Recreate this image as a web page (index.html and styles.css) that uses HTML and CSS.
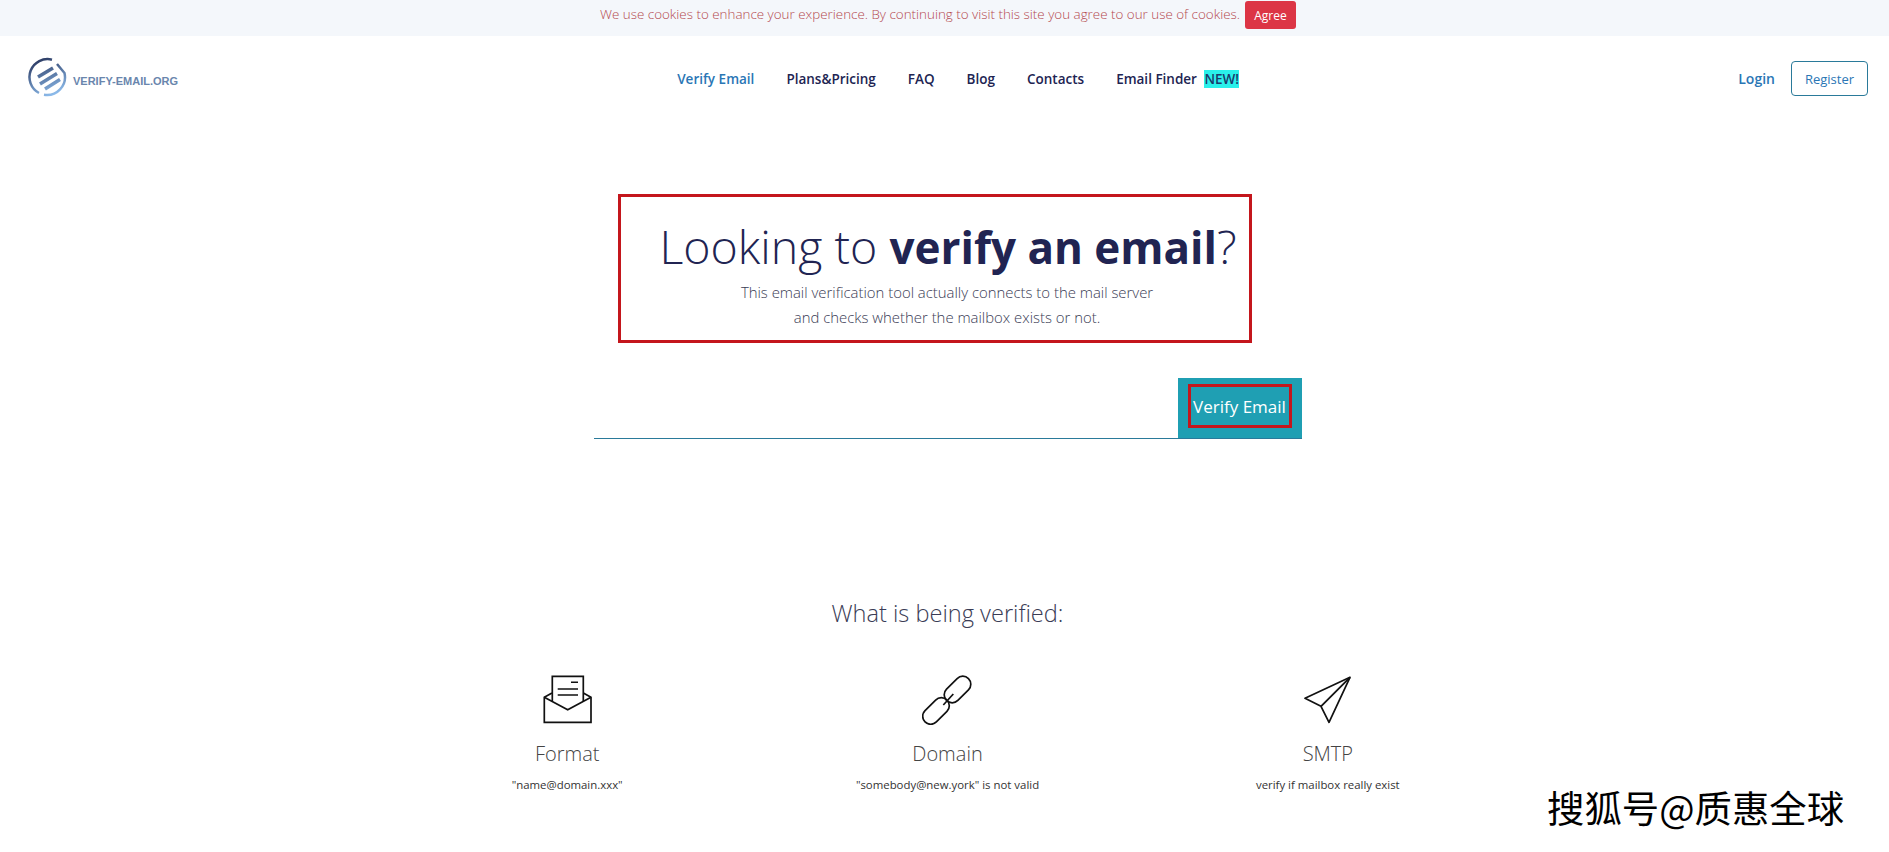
FILE: index.html
```html
<!DOCTYPE html>
<html lang="en">
<head>
    <meta charset="UTF-8">
    <meta name="viewport" content="width=device-width, initial-scale=1.0">
    <title>Verify Email</title>
    <link rel="stylesheet" href="styles.css">
</head>
<body>
    <div class="cookie-bar">
        <span>We use cookies to enhance your experience. By continuing to visit this site you agree to our use of cookies.</span>
        <button class="agree-btn">Agree</button>
    </div>

    <div class="navbar">
        <a class="logo" href="#">
            <svg width="40" height="40" viewBox="0 0 40 40" fill="none">
                <defs>
                    <linearGradient id="logo-grad" gradientUnits="userSpaceOnUse" x1="12" y1="2" x2="26" y2="38">
                        <stop offset="0" stop-color="#2b3a63"/>
                        <stop offset="1" stop-color="#8dbcec"/>
                    </linearGradient>
                </defs>
                <path d="M25 2.700A18 18 0 0 0 12 36" stroke="url(#logo-grad)" stroke-width="2.500"/>
                <path d="M17 37.800A18 18 0 0 0 37.500 16L30 7" stroke="url(#logo-grad)" stroke-width="2.500"/>
                <path d="M11 20L26 11M13 27L30 16.500M18 32L33 22.500" stroke="url(#logo-grad)" stroke-width="3.500"/>
            </svg>
            <span>VERIFY-EMAIL.ORG</span>
        </a>
        <nav class="main-nav">
            <a class="active" href="#">Verify Email</a>
            <a href="#">Plans&amp;Pricing</a>
            <a href="#">FAQ</a>
            <a href="#">Blog</a>
            <a href="#">Contacts</a>
            <a href="#">Email Finder <mark>NEW!</mark></a>
        </nav>
        <div class="auth">
            <a class="login" href="#">Login</a>
            <a class="register" href="#">Register</a>
        </div>
    </div>

    <div class="main">
        <div class="hero">
            <h1>Looking to <strong>verify an email</strong>?</h1>
            <p>This email verification tool actually connects to the mail server<br>and checks whether the mailbox exists or not.</p>
        </div>

        <form class="verify-form">
            <input type="text" aria-label="Email">
            <div class="verify-btn"><span>Verify Email</span></div>
        </form>

        <h2 class="features-title">What is being verified:</h2>

        <div class="features">
            <div class="feature">
                <svg width="50" height="50" viewBox="0 0 50 50" fill="none" stroke="#111" stroke-width="1.700">
                    <path d="M10 18L2.300 22.300V47.300H49V22.300L41.300 18"/>
                    <path d="M2.300 22.300L25.700 34.700L49 22.300"/>
                    <path d="M10.300 26V1.300H41.300V26"/>
                    <path d="M29 7.300H36M15.700 14H36M15.700 20H36" stroke-width="1.400"/>
                </svg>
                <h3>Format</h3>
                <p>"name@domain.xxx"</p>
            </div>
            <div class="feature">
                <svg width="50" height="50" viewBox="0 0 50 50" fill="none" stroke="#111" stroke-width="1.700">
                    <rect x="-15.500" y="-8" width="31" height="16" rx="8" transform="translate(35.500 14.500) rotate(-45)"/>
                    <rect x="-15.500" y="-8" width="31" height="16" rx="8" transform="translate(14 36) rotate(-45)"/>
                    <path d="M21.300 30L31.300 19"/>
                </svg>
                <h3>Domain</h3>
                <p>"somebody@new.york" is not valid</p>
            </div>
            <div class="feature">
                <svg width="50" height="50" viewBox="0 0 50 50" fill="none" stroke="#111" stroke-width="1.700" stroke-linejoin="round">
                    <path d="M47 2.300L2 23.300L18 31.300L26 47.300Z"/>
                    <path d="M47 2.300L18 31.300"/>
                </svg>
                <h3>SMTP</h3>
                <p>verify if mailbox really exist</p>
            </div>
        </div>
    </div>

    <div class="watermark">搜狐号@质惠全球</div>
</body>
</html>
```

FILE: styles.css
```css
* {
    margin: 0;
    padding: 0;
    box-sizing: border-box;
}

body {
    font-family: 'Open Sans', 'Noto Sans', sans-serif;
    background: #fff;
    color: #212452;
    height: 852px;
    overflow: hidden;
    position: relative;
}

a {
    text-decoration: none;
}

/* cookie bar */
.cookie-bar {
    height: 36px;
    background: #f4f7fb;
    display: flex;
    justify-content: center;
    align-items: flex-start;
    gap: 5px;
    padding-left: 7px;
    color: #b5494f;
    font-size: 13.4px;
    font-weight: 300;
}

.cookie-bar span {
    line-height: 29px;
}

.agree-btn {
    width: 51px;
    height: 28px;
    margin-top: 1px;
    background: #dc3545;
    color: #fff;
    border: none;
    border-radius: 3px;
    font-family: inherit;
    font-size: 12px;
}

/* header */
.navbar {
    height: 85px;
    display: flex;
    justify-content: space-between;
    align-items: center;
    padding: 0 21px 0 27px;
}

.logo {
    display: flex;
    align-items: center;
    gap: 6px;
    width: 150px;
    margin-top: -4px;
    color: #6a86ad;
    font-size: 11px;
    font-weight: 700;
    font-family: 'Liberation Sans', sans-serif;
    white-space: nowrap;
}

.logo svg {
    flex: none;
}

.logo span {
    margin-top: 8px;
}

.main-nav {
    display: flex;
    gap: 32px;
    margin-left: 1px;
}

.main-nav a {
    color: #212452;
    font-size: 13.500px;
    font-weight: 600;
}

.main-nav a.active {
    color: #2a76b5;
}

.main-nav mark {
    background: #2af0ea;
    color: #1a3a6a;
    margin-left: 4px;
}

.auth {
    display: flex;
    align-items: center;
    gap: 16px;
}

.login {
    color: #2a76b5;
    font-size: 14px;
    font-weight: 600;
}

.register {
    width: 77px;
    height: 35px;
    display: flex;
    align-items: center;
    justify-content: center;
    border: 1px solid #2a7a9a;
    border-radius: 4px;
    color: #2a76b5;
    font-size: 13px;
}

/* main column */
.main {
    width: 1141px;
    margin: 0 auto;
    position: relative;
    left: 3px;
}

.hero {
    width: 634px;
    height: 149px;
    margin: 73px 0 0 241px;
    border: 3px solid #c4161c;
    text-align: center;
    padding: 18px 0 0 26px;
}

.hero h1 {
    font-size: 46.500px;
    font-weight: 300;
    line-height: 62px;
}

.hero h1 strong {
    font-size: 44px;
    font-weight: 700;
}

.hero p {
    font-size: 14.900px;
    font-weight: 300;
    line-height: 25px;
    margin-top: 2px;
    margin-right: 2px;
    color: #3a3c55;
}

.verify-form {
    width: 708px;
    height: 61px;
    margin: 35px auto 0;
    display: flex;
    border-bottom: 1px solid #2a7a9a;
}

.verify-form input {
    flex: 1;
    border: none;
    outline: none;
}

.verify-btn {
    width: 124px;
    background: #1f9fb3;
    padding: 6px 10px;
}

.verify-btn span {
    display: flex;
    align-items: center;
    justify-content: center;
    height: 44px;
    padding-top: 1px;
    border: 3px solid #c4161c;
    color: #fff;
    font-size: 17px;
    white-space: nowrap;
}

.features-title {
    font-size: 23.600px;
    font-weight: 300;
    text-align: center;
    margin-top: 158px;
    line-height: 33px;
    color: #3a3c55;
}

.features {
    display: grid;
    grid-template-columns: repeat(3, 1fr);
    margin-top: 45px;
    text-align: center;
}

.feature h3 {
    font-size: 20px;
    font-weight: 300;
    line-height: 28px;
    margin-top: 10px;
    color: #444;
}

.feature p {
    font-size: 11.400px;
    line-height: 16px;
    margin-top: 9px;
    color: #333;
}

.watermark {
    position: absolute;
    left: 1547px;
    top: 785px;
    font-family: 'Noto Sans CJK SC', sans-serif;
    font-size: 37.400px;
    line-height: 44px;
    color: #000;
    text-shadow: 1px 1px 0 #fff, -1px 0 0 #fff;
    white-space: nowrap;
}
```
